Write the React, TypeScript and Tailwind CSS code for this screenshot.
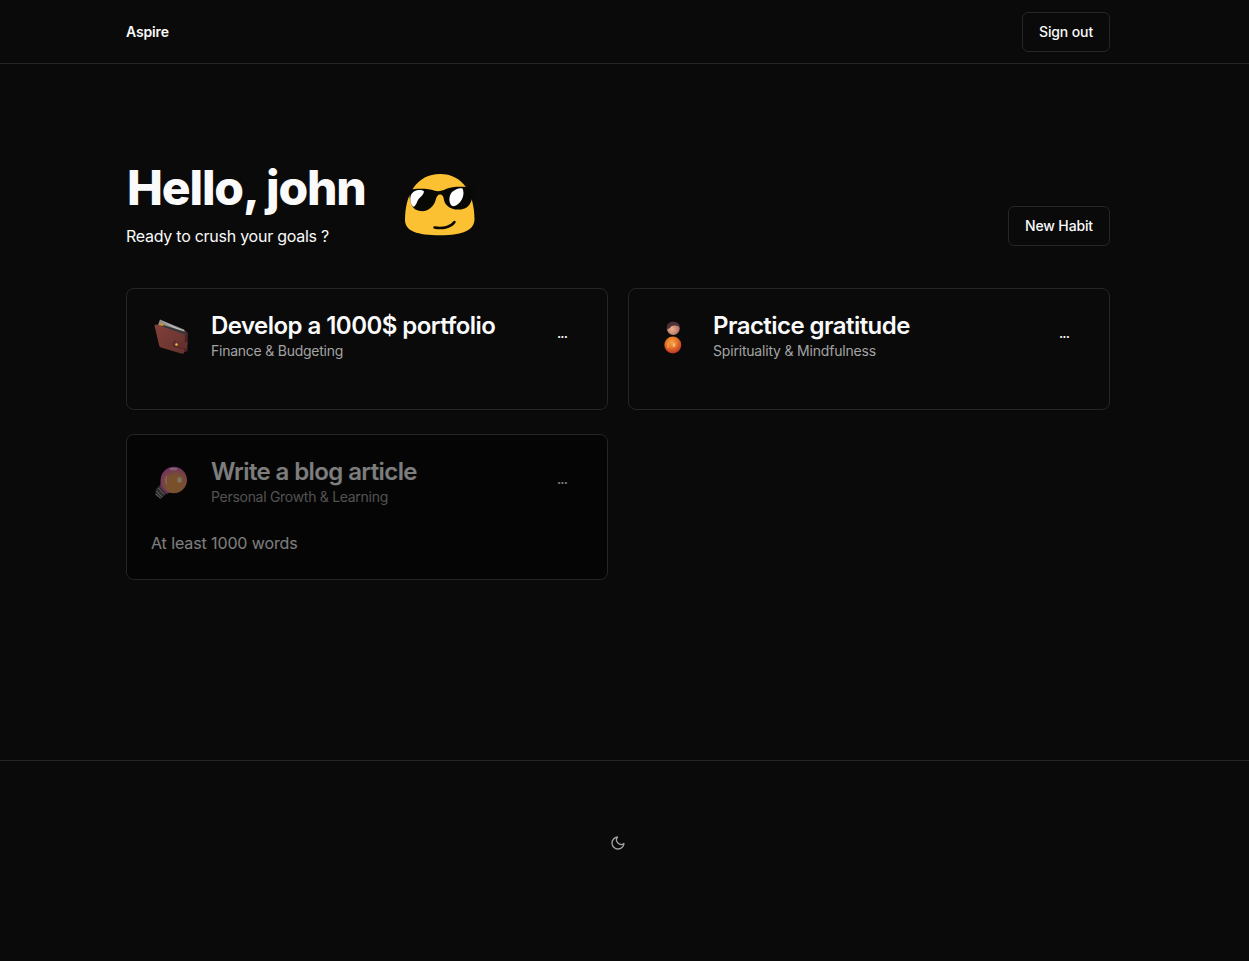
import React from "react";

function MoonIcon() {
  return (
    <svg width="16" height="16" viewBox="0 0 24 24" fill="none" stroke="#a3a3a3" strokeWidth="2" strokeLinecap="round" strokeLinejoin="round">
      <path d="M21 12.790A9 9 0 1 1 11.210 3 7 7 0 0 0 21 12.790z" />
    </svg>
  );
}

function CoolFace() {
  return (
    <svg width="70" height="62" viewBox="0 0 70 62" className="shrink-0">
      <path d="M0 46C0 20 12 0 35 0s34 19 34.500 45C69.500 56 58 61.300 35 61.300S0 57 0 46Z" fill="#fcc133" />
      <path d="M0 16.500C10 14 23 14 29 16.500C33 18 37 17 41 15C48 12 60 12.500 69.500 14C67 24 67 34 56 35.500C45 36.500 40 31 39 26C38.500 22 37 20.500 35 20.500C32.500 20.500 31.500 23 30.500 26.500C28 34 22 38 15 37C7 36 5 29 4 19Z" fill="#080804" />
      <path d="M9 17.500C13 15.600 17 15.600 19 17.500C18.500 22 14 23 12.500 27C11 31 9 34 7.500 32C5 29 3.500 21 9 17.500Z" fill="#fff" />
      <path d="M47 18C51 14.500 55 13.500 57.500 14.500C60 20 57.500 27 52.500 30.500C49 33 46.500 32.500 45.500 30C43.500 26 44.500 21 47 18Z" fill="#fff" />
      <path d="M29.500 53.500C38 55 46 53 49.500 48" stroke="#080804" strokeWidth="2.500" fill="none" strokeLinecap="round" />
    </svg>
  );
}

function Wallet() {
  return (
    <svg width="40" height="40" viewBox="0 0 40 40" className="shrink-0">
      <defs>
        <linearGradient id="leather" x1="0" y1="0" x2="1" y2="1">
          <stop offset="0" stopColor="#824039" />
          <stop offset="1" stopColor="#64312e" />
        </linearGradient>
      </defs>
      <path d="M4 8L34 13L37 16L36.500 34L32 36Z" fill="#4b2323" />
      <path d="M7 8L9 2.500L33 12.500L35 18L27 17Z" fill="#8f8c89" />
      <path d="M9 3.500L33 13.500L34 17Z" fill="#c0bcb6" />
      <path d="M9 7L35 15L34.500 19L10 11Z" fill="#353738" />
      <path d="M9 6L13 7.500L12 9L8 8Z" fill="#d29528" />
      <path d="M3.500 8.500Q4.500 7 7 8L32.500 17Q34.500 18 34 20L33 35.500Q32.500 37.500 30 36.500L10 30.500Q8.500 30 8 28Z" fill="url(#leather)" />
      <path d="M25 24Q22 24 22 27Q22 30 25 30L35.500 32L36.500 25Z" fill="#66302e" />
      <path d="M25 24Q22 24 22 27Q22 30 25 30L35 32" stroke="#4b2425" strokeWidth=".7" fill="none" />
      <circle cx="25.500" cy="27.500" r="1.200" fill="#edc13d" />
    </svg>
  );
}

function Person() {
  return (
    <svg width="40" height="40" viewBox="0 0 40 40" className="shrink-0">
      <defs>
        <radialGradient id="robe" cx=".45" cy=".35" r=".65">
          <stop offset="0" stopColor="#f6a24b" />
          <stop offset=".45" stopColor="#e87a24" />
          <stop offset="1" stopColor="#bd332c" />
        </radialGradient>
        <radialGradient id="skin" cx=".4" cy=".55" r=".65">
          <stop offset="0" stopColor="#efad8f" />
          <stop offset="1" stopColor="#a86c5c" />
        </radialGradient>
      </defs>
      <g transform="translate(-1.700)">
        <circle cx="22" cy="11.500" r="6.400" fill="url(#skin)" />
        <path d="M15.600 12C15 7 18 4.800 22 4.800C26 4.800 28.500 7 28.300 10C24 7.800 20 8 18.500 11L15.600 12.500Z" fill="#4b313a" />
        <circle cx="21.500" cy="28" r="8.500" fill="url(#robe)" />
        <ellipse cx="22.700" cy="28" rx="1.400" ry="2" fill="#ffc291" opacity=".8" />
        <path d="M17 26Q16 29 17 31" stroke="#f7b06b" strokeWidth="1.300" fill="none" opacity=".7" />
      </g>
    </svg>
  );
}

function Bulb() {
  return (
    <svg width="40" height="40" viewBox="0 0 40 40" className="shrink-0">
      <defs>
        <radialGradient id="glass" cx=".55" cy=".65" r=".65">
          <stop offset="0" stopColor="#f6a04c" />
          <stop offset=".5" stopColor="#f0a061" />
          <stop offset="1" stopColor="#e660c4" />
        </radialGradient>
      </defs>
      <path d="M9 22L16 30L12 34L10 36L4 32L5 26Z" fill="#58585b" />
      <path d="M5.500 28L11 34M7.500 25L13 31.500M5 31L9.500 35.500" stroke="#c4c2c5" strokeWidth="1" />
      <path d="M10 16L9 24L15 31L24 28Z" fill="#c95da4" />
      <circle cx="22.800" cy="17" r="13.200" fill="url(#glass)" />
      <ellipse cx="22.500" cy="6" rx="4" ry="1.300" fill="#ffd5f4" opacity=".85" />
      <ellipse cx="28.500" cy="17" rx="2.200" ry="2.800" fill="#fff2df" opacity=".85" />
      <path d="M15.500 13Q14 17 15.500 21" stroke="#ffd2b2" strokeWidth="1.500" fill="none" />
    </svg>
  );
}

type HabitProps = {
  icon: React.ReactNode;
  title: React.ReactNode;
  category: React.ReactNode;
  note?: React.ReactNode;
  done?: boolean;
};

function HabitCard({ icon, title, category, note, done }: HabitProps) {
  return (
    <article className="relative overflow-hidden rounded-lg border border-[#262626] p-6">
      <div className="flex h-12 items-center gap-5">
        {icon}
        <div className="grow whitespace-nowrap">
          <h2 className="-mt-px mb-px text-2xl/7 font-semibold">{title}</h2>
          <p className="text-sm/5 text-[#a3a3a3]">{category}</p>
        </div>
        <button className="flex h-10 items-center px-4 pb-2 text-sm font-medium tracking-[-0.9px]">...</button>
      </div>
      <div className="pt-6">{note}</div>
      {done && <div className="absolute inset-0 bg-black/50" />}
    </article>
  );
}

export default function App() {
  return (
    <div className="flex min-h-[961px] flex-col bg-[#0a0a0a] font-['Inter','Liberation_Sans',sans-serif] text-[#fafafa]">
      <header className="h-16 border-b border-[#262626]">
        <div className="flex h-16 w-[1236px] items-center justify-between px-[126px] pb-px text-sm">
          <span className="font-semibold tracking-[-0.15px]">Aspire</span>
          <button className="h-10 w-[88px] rounded-md border border-[#262626] font-medium tracking-[-0.12px] whitespace-nowrap">Sign out</button>
        </div>
      </header>
      <main className="h-[696px] w-[1236px] px-[126px] pt-[100px]">
        <div className="flex h-[82px] justify-between">
          <div className="flex gap-10">
            <div className="w-[239px] whitespace-nowrap">
              <h1 className="pl-px text-5xl leading-[48px] font-extrabold tracking-[-1.15px]">Hello, john</h1>
              <p className="mt-3 text-base leading-6 tracking-[-0.26px]">Ready to crush your goals ?</p>
            </div>
            <div className="pt-[10px]"><CoolFace /></div>
          </div>
          <button className="h-10 w-[102px] self-end rounded-md border border-[#262626] text-sm font-medium tracking-[-0.15px] whitespace-nowrap">New Habit</button>
        </div>
        <section className="mt-[42px] grid grid-cols-2 gap-x-5 gap-y-6">
          <HabitCard
            icon={<Wallet />}
            title={<span className="tracking-[-0.54px]">Develop a 1000$ portfolio</span>}
            category={<span className="tracking-[-0.24px]">Finance &amp; Budgeting</span>}
          />
          <HabitCard
            icon={<Person />}
            title={<span className="tracking-[-0.55px]">Practice gratitude</span>}
            category={<span className="tracking-[-0.19px]">Spirituality &amp; Mindfulness</span>}
          />
          <HabitCard
            icon={<Bulb />}
            title={<span className="tracking-[-0.6px]">Write a blog article</span>}
            category={<span className="tracking-[-0.29px]">Personal Growth &amp; Learning</span>}
            note={<span className="tracking-[-0.11px]">At least 1000 words</span>}
            done
          />
        </section>
      </main>
      <footer className="grow border-t border-[#262626]">
        <div className="flex w-[1236px] justify-center pt-[74px]">
          <MoonIcon />
        </div>
      </footer>
    </div>
  );
}
